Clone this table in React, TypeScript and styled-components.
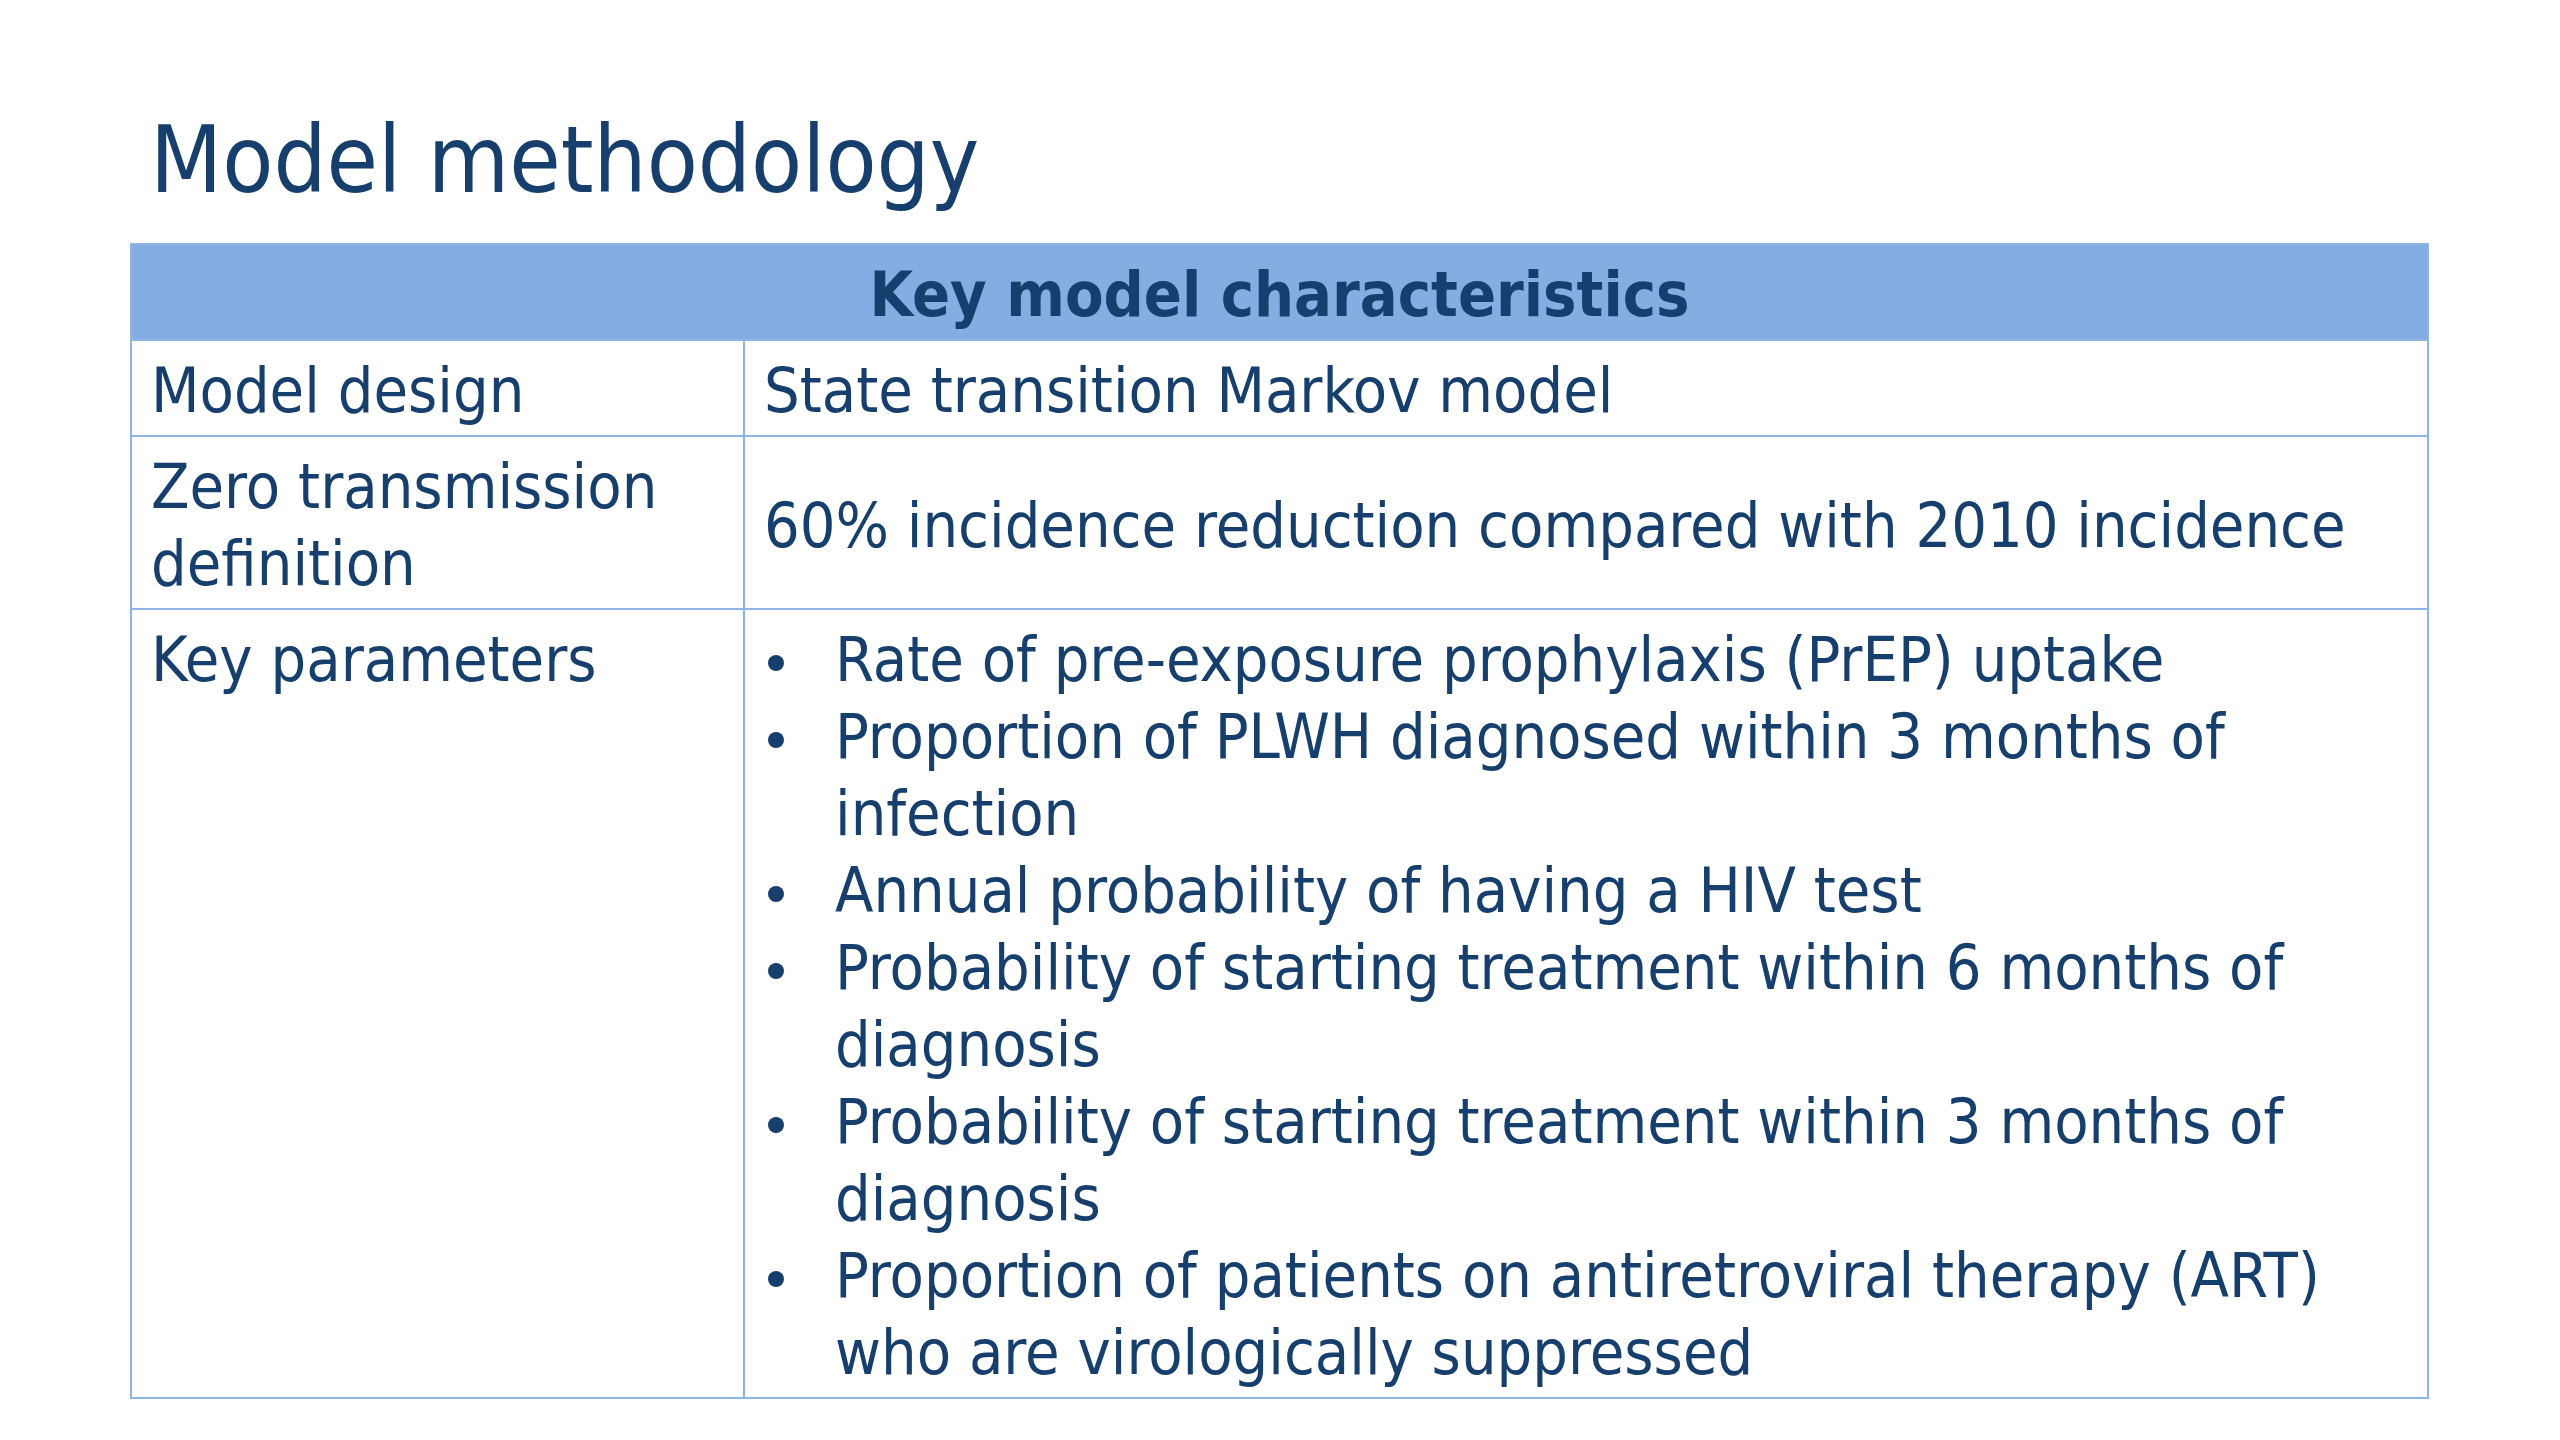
import React from "react";
import styled, { createGlobalStyle } from "styled-components";

const GlobalStyle = createGlobalStyle`
  html, body { margin: 0; padding: 0; background: #ffffff; }
  body { font-family: "DejaVu Sans Condensed", "DejaVu Sans", sans-serif; color: #173f6d; }
  * { box-sizing: border-box; }
`;

const Slide = styled.main`
  width: 2560px;
  height: 1440px;
  padding: 104px 0 0 130px;
  background: #ffffff;
`;

const Title = styled.h1`
  margin: 0 0 27px 20px;
  font-family: "DejaVu Sans Condensed", "DejaVu Sans", sans-serif;
  font-weight: normal;
  font-size: 93px;
  line-height: 112px;
  color: #173f6d;
`;

const Table = styled.section`
  width: 2299px;
  border: 2px solid #8eb4e3;
  display: grid;
  grid-template-columns: 611px 1fr;
  font-size: 62.5px;
  line-height: 77px;
`;

const HeaderCell = styled.div`
  grid-column: 1 / -1;
  background: #84aee2;
  padding: 11px 19px 6px;
  text-align: center;
  font-weight: bold;
  color: #173f6d;
`;

const Cell = styled.div<{ $divider?: boolean; $middle?: boolean }>`
  border-top: 2px solid #8eb4e3;
  border-left: ${(p) => (p.$divider ? "2px solid #8eb4e3" : "none")};
  padding: 11px 10px 6px 19px;
  display: flex;
  flex-direction: column;
  justify-content: ${(p) => (p.$middle ? "center" : "flex-start")};
  white-space: nowrap;
`;

const WrapCell = styled(Cell)`
  white-space: normal;
`;

const List = styled.ul`
  margin: 0;
  padding: 0;
  list-style: none;
`;

const Item = styled.li`
  display: flex;
  align-items: flex-start;
`;

const BulletBox = styled.span`
  flex: 0 0 71px;
  height: 77px;
  position: relative;
  &::before {
    content: "";
    position: absolute;
    left: 4px;
    top: 34px;
    width: 16px;
    height: 16px;
    border-radius: 50%;
    background: #173f6d;
  }
`;

const ItemText = styled.span`
  flex: 1;
`;

const bullets = [
  "Rate of pre-exposure prophylaxis (PrEP) uptake",
  ["Proportion of PLWH diagnosed within 3 months of", "infection"],
  "Annual probability of having a HIV test",
  ["Probability of starting treatment within 6 months of", "diagnosis"],
  ["Probability of starting treatment within 3 months of", "diagnosis"],
  ["Proportion of patients on antiretroviral therapy (ART)", "who are virologically suppressed"],
];

export default function App() {
  return (
    <>
      <GlobalStyle />
      <Slide>
        <Title>Model methodology</Title>
        <Table>
          <HeaderCell>Key model characteristics</HeaderCell>

          <Cell>Model design</Cell>
          <Cell $divider>State transition Markov model</Cell>

          <Cell>
            <span>Zero transmission</span>
            <span>definition</span>
          </Cell>
          <Cell $divider $middle>
            60% incidence reduction compared with 2010 incidence
          </Cell>

          <Cell>Key parameters</Cell>
          <WrapCell $divider>
            <List>
              {bullets.map((b, i) => (
                <Item key={i}>
                  <BulletBox />
                  <ItemText>
                    {Array.isArray(b) ? (
                      <>
                        {b[0]}
                        <br />
                        {b[1]}
                      </>
                    ) : (
                      b
                    )}
                  </ItemText>
                </Item>
              ))}
            </List>
          </WrapCell>
        </Table>
      </Slide>
    </>
  );
}
